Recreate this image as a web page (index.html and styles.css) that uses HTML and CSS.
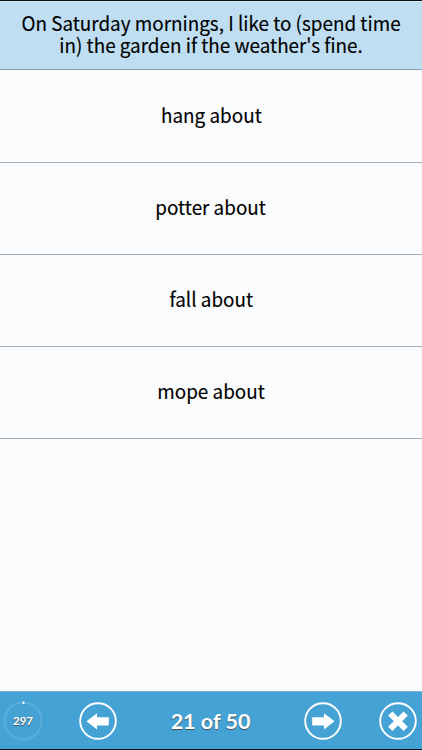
FILE: index.html
```
<!DOCTYPE html>
<html lang="en">
<head>
<meta charset="utf-8">
<title>Phrasal verbs quiz</title>
<link rel="stylesheet" href="styles.css">
</head>
<body>
<main class="quiz">
  <h1 class="question"><span class="copy">On Saturday mornings, I like to (spend time<br>in) the garden if the weather's fine.</span></h1>
  <ul class="answers">
    <li class="answer"><span class="copy">hang about</span></li>
    <li class="answer"><span class="copy">potter about</span></li>
    <li class="answer"><span class="copy">fall about</span></li>
    <li class="answer"><span class="copy">mope about</span></li>
  </ul>
  <footer class="toolbar">
    <div class="timer">
      <svg class="ring" viewBox="0 0 40 40"><circle cx="20" cy="20" r="18.5" fill="none" stroke="#5aaeda" stroke-width="2"/><path d="M20.5 .5v2.5" stroke="#e9f8ff" stroke-width="2"/></svg>
      <span class="seconds">297</span>
    </div>
    <svg class="button" viewBox="0 0 38 38"><circle cx="19" cy="19" r="17.8" fill="none" stroke="#fff" stroke-width="1.9"/><path d="M7.5 19.2 18 11.2v4h11.8v8.2H18v4z" fill="#fff"/></svg>
    <span class="progress">21 of 50</span>
    <svg class="button" viewBox="0 0 38 38"><circle cx="19" cy="19" r="17.8" fill="none" stroke="#fff" stroke-width="1.9"/><path d="M30.5 19.2 20 11.2v4H8.2v8.2H20v4z" fill="#fff"/></svg>
    <svg class="button" viewBox="0 0 38 38"><circle cx="19" cy="19" r="17.8" fill="none" stroke="#fff" stroke-width="1.9"/><path d="m11.3 11.5 15.4 15.4M26.7 11.5 11.3 26.9" fill="none" stroke="#fff" stroke-width="6"/></svg>
  </footer>
</main>
</body>
</html>
```
FILE: styles.css
```
* { box-sizing: border-box; }
body { margin: 0; background: #fafbfd; }
.quiz {
  width: 422px;
  height: 750px;
  display: flex;
  flex-direction: column;
  overflow: hidden;
  border-top: 1px solid #101014;
  border-bottom: 1px solid #071a28;
  color: #000;
  font: 20px/21px "Noto Sans CJK SC", "Noto Sans", sans-serif;
}
.question {
  margin: 0;
  height: 69px;
  padding-top: 10px;
  display: flex;
  justify-content: center;
  align-items: flex-start;
  background: #bfdef2;
  border-top: 1px solid #d3eaf8;
  border-bottom: 1px solid #8d9cac;
  font: inherit;
  line-height: 22px;
  text-align: center;
}
.copy { white-space: nowrap; transform: scaleX(.943); -webkit-text-stroke: .15px #000; }
.answers { margin: 0; padding: 0; flex: 1; list-style: none; }
.answer {
  height: 92px;
  padding-bottom: 4px;
  display: flex;
  align-items: center;
  justify-content: center;
  border-bottom: 1px solid #a5adb7;
}
.answer:first-child { height: 93px; padding-bottom: 3px; }
.toolbar {
  height: 58px;
  padding: 0 4px 0 3px;
  display: flex;
  align-items: center;
  background: #45a2d5;
  border-top: 1px solid #7caecb;
  color: #fff;
  font-family: Lato, sans-serif;
  font-weight: 700;
}
.timer { width: 40px; height: 40px; display: grid; place-items: center; }
.ring, .seconds { grid-area: 1 / 1; }
.ring { width: 40px; height: 40px; }
.seconds { font-size: 11.5px; line-height: 16px; text-shadow: 0 1px 1px #42515a; }
.button { width: 38px; height: 38px; flex: none; }
.timer + .button { margin-left: 36px; }
.progress {
  width: 187px;
  text-align: center;
  font-size: 21.5px;
  line-height: 26px;
  text-shadow: 0 1px 1px #42515a;
}
.button + .button { margin-left: 37px; }
```
